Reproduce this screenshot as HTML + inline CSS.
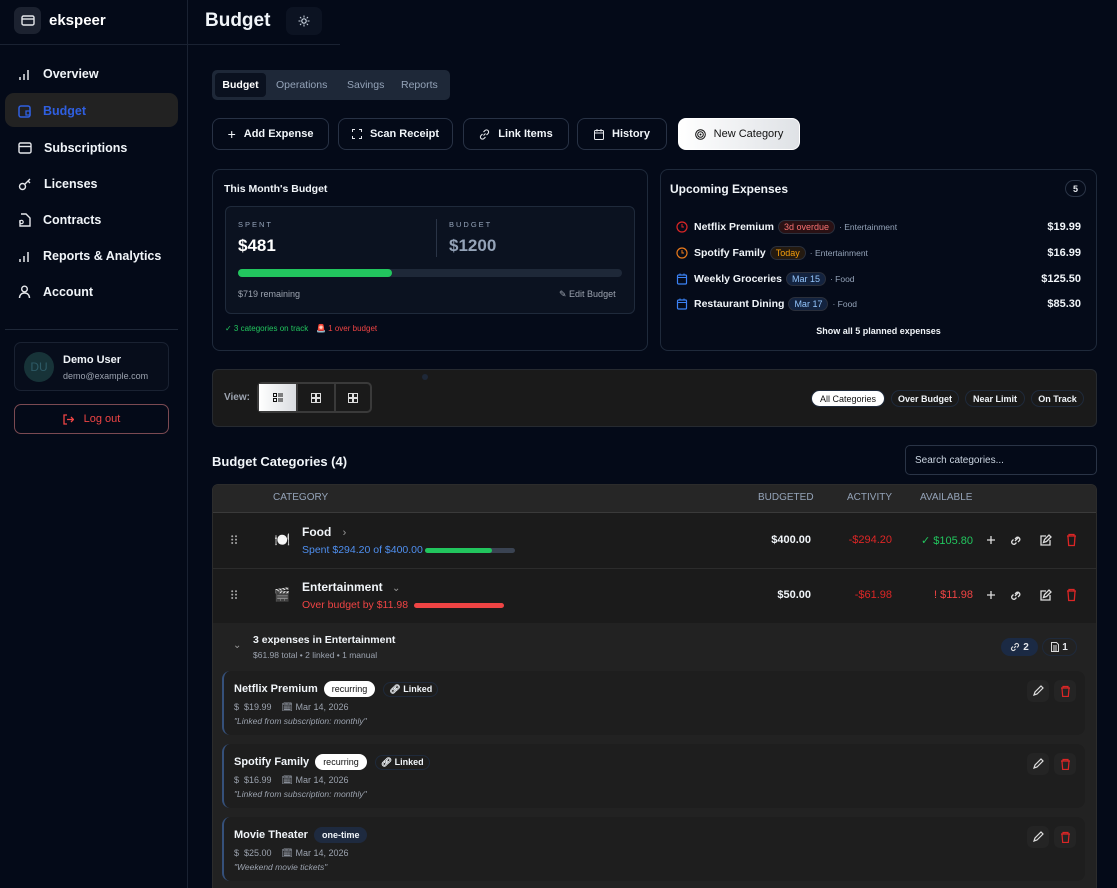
<!DOCTYPE html>
<html><head><meta charset="utf-8"><style>
*{box-sizing:border-box;margin:0;padding:0}
html,body{width:1117px;height:888px;overflow:hidden}
body{background:#040a18;font-family:"Liberation Sans",sans-serif;color:#e5e7eb;position:relative;font-size:11px}
.a{position:absolute}
.b{font-weight:bold}
svg{display:block}
.nav{position:absolute;left:18px;font-size:12.5px;font-weight:bold;color:#f1f5f9;display:flex;align-items:center;gap:12px}
.btn{position:absolute;top:118px;height:32px;border:1px solid #283245;border-radius:8px;display:flex;align-items:center;justify-content:center;gap:8px;font-size:11px;font-weight:bold;color:#f1f5f9;background:#040a18}
.card{position:absolute;border:1px solid #1f2a3b;border-radius:8px;background:#050b19}
.pill{position:absolute;top:390px;height:17px;border:1px solid #1f2a3b;border-radius:9px;font-size:9px;font-weight:bold;display:flex;align-items:center;justify-content:center;color:#f1f5f9}
.tag{display:inline-block;font-size:9px;padding:1px 5px;border-radius:8px;border:1px solid #2a2f3b;margin:0 4px;font-weight:normal}
.ue{position:absolute;left:676px;width:405px;font-size:10.5px;font-weight:bold;color:#f1f5f9;display:flex;align-items:center}
.amt{position:absolute;right:0;font-weight:bold;font-size:11px}
.exp{position:absolute;left:222px;width:863px;height:64px;background:#1e1e1e;border-radius:8px;border-left:2px solid #35507a}
.exp .t{position:absolute;left:10px;top:10px;font-size:11px;font-weight:bold;color:#f1f5f9;display:flex;align-items:center}
.exp .m{position:absolute;left:10px;top:31px;font-size:9px;color:#9ca3af}
.exp .n{position:absolute;left:10px;top:45px;font-size:8.5px;color:#9ca3af;font-style:italic}
.ib{position:absolute;width:22px;height:22px;border-radius:6px;background:#242424;display:flex;align-items:center;justify-content:center}
</style></head><body>
<!-- sidebar -->
<div class="a" style="left:187px;top:0;width:1px;height:888px;background:#1a2232"></div>
<div class="a" style="left:0;top:44px;width:187px;height:1px;background:#1a2232"></div>
<div class="a" style="left:188px;top:44px;width:152px;height:1px;background:#1a2232"></div>
<div class="a" style="left:14px;top:7px;width:27px;height:27px;border-radius:7px;background:#1c2230;display:flex;align-items:center;justify-content:center"><svg width="14" height="11"><rect x="1" y="1" width="12" height="9" rx="1.5" fill="none" stroke="#e5e7eb" stroke-width="1.4"/><line x1="1" y1="4" x2="13" y2="4" stroke="#e5e7eb" stroke-width="1.4"/></svg></div>
<div class="a b" style="left:49px;top:12px;font-size:15px;color:#fff">ekspeer</div>

<div class="a" style="left:5px;top:93px;width:173px;height:34px;border-radius:9px;background:#222"></div>
<div class="nav" style="top:67px"><svg width="13" height="13"><path d="M2 12V9M6 12V6M10 12V2" stroke="#e5e7eb" stroke-width="1.5"/></svg>Overview</div>
<div class="nav" style="top:104px;color:#2f5fe0"><svg width="13" height="13"><rect x="1" y="1" width="11" height="11" rx="2" fill="none" stroke="#2f5fe0" stroke-width="1.5"/><path d="M8 6h4v4H8z" fill="none" stroke="#2f5fe0" stroke-width="1.3"/></svg>Budget</div>
<div class="nav" style="top:141px"><svg width="14" height="12"><rect x="1" y="1" width="12" height="10" rx="1.5" fill="none" stroke="#e5e7eb" stroke-width="1.4"/><line x1="1" y1="4.5" x2="13" y2="4.5" stroke="#e5e7eb" stroke-width="1.4"/></svg>Subscriptions</div>
<div class="nav" style="top:177px"><svg width="14" height="13"><circle cx="4.5" cy="8.5" r="3" fill="none" stroke="#e5e7eb" stroke-width="1.4"/><path d="M7 6l5-5M10 3l2 2" stroke="#e5e7eb" stroke-width="1.4"/></svg>Licenses</div>
<div class="nav" style="top:213px"><svg width="13" height="14"><path d="M3 1h5l4 4v8H2V7" fill="none" stroke="#e5e7eb" stroke-width="1.4"/><circle cx="3.5" cy="9" r="1.7" fill="none" stroke="#e5e7eb" stroke-width="1.2"/></svg>Contracts</div>
<div class="nav" style="top:249px"><svg width="13" height="13"><path d="M2 12V9M6 12V6M10 12V2" stroke="#e5e7eb" stroke-width="1.5"/></svg>Reports &amp; Analytics</div>
<div class="nav" style="top:285px"><svg width="13" height="14"><circle cx="6.5" cy="4" r="2.8" fill="none" stroke="#e5e7eb" stroke-width="1.4"/><path d="M1.5 13c0-3 2-5 5-5s5 2 5 5" fill="none" stroke="#e5e7eb" stroke-width="1.4"/></svg>Account</div>
<div class="a" style="left:5px;top:329px;width:173px;height:1px;background:#1f2838"></div>
<div class="a" style="left:14px;top:342px;width:155px;height:49px;border:1px solid #1a2232;border-radius:7px;background:#070d1b"></div>
<div class="a" style="left:24px;top:352px;width:30px;height:30px;border-radius:50%;background:#173338;color:#2d5a66;font-size:12px;display:flex;align-items:center;justify-content:center">DU</div>
<div class="a b" style="left:63px;top:354px;font-size:11px;color:#f1f5f9">Demo User</div>
<div class="a" style="left:63px;top:371px;font-size:9px;color:#9ca3af">demo@example.com</div>
<div class="a" style="left:14px;top:404px;width:155px;height:30px;border:1px solid #7b4a52;border-radius:7px;display:flex;align-items:center;justify-content:center;gap:10px;color:#ef4444;font-size:11px"><svg width="11" height="11"><path d="M4 1H1v9h3M4 5.5h6M8 3l2.5 2.5L8 8" fill="none" stroke="#ef4444" stroke-width="1.3"/></svg>Log out</div>

<!-- header -->
<div class="a b" style="left:205px;top:10px;font-size:19px;color:#f1f5f9">Budget</div>
<div class="a" style="left:286px;top:7px;width:36px;height:28px;border-radius:7px;background:#0c1322;display:flex;align-items:center;justify-content:center"><svg width="12" height="12"><circle cx="6" cy="6" r="2.2" fill="none" stroke="#cbd5e1" stroke-width="1.2"/><path d="M6 0.5v2M6 9.5v2M0.5 6h2M9.5 6h2M2 2l1.3 1.3M8.7 8.7L10 10M2 10l1.3-1.3M8.7 3.3L10 2" stroke="#cbd5e1" stroke-width="1"/></svg></div>

<!-- tabs -->
<div class="a" style="left:212px;top:70px;width:238px;height:30px;background:#1e2838;border-radius:5px"></div>
<div class="a b" style="left:215px;top:73px;width:51px;height:24px;background:#0a111f;border-radius:4px;font-size:10.5px;color:#fff;display:flex;align-items:center;justify-content:center">Budget</div>
<div class="a" style="left:276px;top:79px;font-size:10.5px;color:#94a3b8">Operations</div>
<div class="a" style="left:347px;top:79px;font-size:10.5px;color:#94a3b8">Savings</div>
<div class="a" style="left:401px;top:79px;font-size:10.5px;color:#94a3b8">Reports</div>

<!-- buttons -->
<div class="btn" style="left:212px;width:117px"><span style="font-size:14px;font-weight:normal">+</span>Add Expense</div>
<div class="btn" style="left:338px;width:115px"><svg width="10" height="10"><path d="M0.5 3V0.5H3M7 0.5h2.5V3M9.5 7v2.5H7M3 9.5H0.5V7" fill="none" stroke="#e5e7eb"/></svg>Scan Receipt</div>
<div class="btn" style="left:463px;width:106px"><svg width="11" height="11"><path d="M4.5 6.5l2-2M3.5 5L2 6.5a2 2 0 003 3L6.5 8M7.5 6L9 4.5a2 2 0 00-3-3L4.5 3" fill="none" stroke="#e5e7eb" stroke-width="1.1"/></svg>Link Items</div>
<div class="btn" style="left:577px;width:90px"><svg width="10" height="11"><rect x="0.5" y="1.5" width="9" height="9" rx="1" fill="none" stroke="#e5e7eb"/><path d="M0.5 4h9M3 0v2.5M7 0v2.5" stroke="#e5e7eb"/></svg>History</div>
<div class="btn" style="left:678px;width:122px;background:linear-gradient(90deg,#fff,#dfe2e6);color:#111;font-weight:normal;border-color:#fff"><svg width="11" height="11"><circle cx="5.5" cy="5.5" r="4.8" fill="none" stroke="#111"/><circle cx="5.5" cy="5.5" r="2.8" fill="none" stroke="#111"/><circle cx="5.5" cy="5.5" r="1" fill="#111"/></svg>New Category</div>

<!-- budget card -->
<div class="card" style="left:212px;top:169px;width:436px;height:182px"></div>
<div class="a b" style="left:224px;top:183px;font-size:10.5px;color:#f1f5f9">This Month's Budget</div>
<div class="a" style="left:225px;top:206px;width:410px;height:108px;border:1px solid #1f2a3b;border-radius:6px;background:#0b1220"></div>
<div class="a" style="left:238px;top:220px;font-size:7.5px;letter-spacing:2px;color:#94a3b8">SPENT</div>
<div class="a b" style="left:238px;top:236px;font-size:17px;color:#fff">$481</div>
<div class="a" style="left:436px;top:219px;width:1px;height:38px;background:#2a3446"></div>
<div class="a" style="left:449px;top:220px;font-size:7.5px;letter-spacing:2px;color:#94a3b8">BUDGET</div>
<div class="a b" style="left:449px;top:236px;font-size:17px;color:#94a3b8">$1200</div>
<div class="a" style="left:238px;top:269px;width:384px;height:8px;border-radius:4px;background:#1e2838"></div>
<div class="a" style="left:238px;top:269px;width:154px;height:8px;border-radius:4px;background:#22c55e"></div>
<div class="a" style="left:238px;top:289px;font-size:9px;color:#9ca3af">$719 remaining</div>
<div class="a" style="left:559px;top:289px;font-size:9px;color:#9ca3af">✎ Edit Budget</div>
<div class="a" style="left:225px;top:324px;font-size:8px;color:#22c55e">✓ 3 categories on track</div>
<div class="a" style="left:316px;top:324px;font-size:8px;color:#ef4444">🚨 1 over budget</div>

<!-- upcoming -->
<div class="card" style="left:660px;top:169px;width:437px;height:182px"></div>
<div class="a b" style="left:670px;top:182px;font-size:12px;color:#f1f5f9">Upcoming Expenses</div>
<div class="a b" style="left:1065px;top:180px;width:21px;height:17px;border:1px solid #2a3446;border-radius:9px;font-size:9px;display:flex;align-items:center;justify-content:center">5</div>
<div class="ue" style="top:220px"><svg width="12" height="12"><circle cx="6" cy="6" r="5" fill="none" stroke="#dc2626" stroke-width="1.2"/><path d="M6 3v3h2" stroke="#dc2626" fill="none"/></svg><span style="margin-left:6px">Netflix Premium</span><span class="tag" style="color:#f87171;background:#2a1114">3d overdue</span><span style="font-weight:normal;font-size:8.5px;color:#94a3b8">· Entertainment</span><span class="amt">$19.99</span></div>
<div class="ue" style="top:246px"><svg width="12" height="12"><circle cx="6" cy="6" r="5" fill="none" stroke="#ea7a1b" stroke-width="1.2"/><path d="M6 3v3h2" stroke="#ea7a1b" fill="none"/></svg><span style="margin-left:6px">Spotify Family</span><span class="tag" style="color:#f59e0b;background:#241a10">Today</span><span style="font-weight:normal;font-size:8.5px;color:#94a3b8">· Entertainment</span><span class="amt">$16.99</span></div>
<div class="ue" style="top:272px"><svg width="12" height="12"><rect x="1.5" y="2" width="9" height="9" rx="1" fill="none" stroke="#3b82f6" stroke-width="1.2"/><path d="M1.5 4.5h9M4 0.5v2M8 0.5v2" stroke="#3b82f6"/></svg><span style="margin-left:6px">Weekly Groceries</span><span class="tag" style="color:#93c5fd;background:#13233f">Mar 15</span><span style="font-weight:normal;font-size:8.5px;color:#94a3b8">· Food</span><span class="amt">$125.50</span></div>
<div class="ue" style="top:297px"><svg width="12" height="12"><rect x="1.5" y="2" width="9" height="9" rx="1" fill="none" stroke="#3b82f6" stroke-width="1.2"/><path d="M1.5 4.5h9M4 0.5v2M8 0.5v2" stroke="#3b82f6"/></svg><span style="margin-left:6px">Restaurant Dining</span><span class="tag" style="color:#93c5fd;background:#13233f">Mar 17</span><span style="font-weight:normal;font-size:8.5px;color:#94a3b8">· Food</span><span class="amt">$85.30</span></div>
<div class="a b" style="left:660px;width:437px;top:326px;text-align:center;font-size:9px;color:#f1f5f9">Show all 5 planned expenses</div>

<!-- view bar -->
<div class="a" style="left:212px;top:369px;width:885px;height:58px;background:#1a1a1a;border:1px solid #262a30;border-radius:6px"></div>
<div class="a" style="left:422px;top:374px;width:6px;height:6px;border-radius:50%;background:#1e2838"></div>
<div class="a b" style="left:224px;top:392px;font-size:10px;color:#9ca3af">View:</div>
<div class="a" style="left:257px;top:382px;width:115px;height:31px;border:2px solid #3a3a3a;border-radius:5px;background:#1a1a1a;display:flex">
<div style="width:37px;background:linear-gradient(90deg,#fff,#d9dce0);display:flex;align-items:center;justify-content:center"><svg width="10" height="9"><path d="M0.5 0.5h3v3h-3zM0.5 5.5h3v3h-3zM5 1h5M5 3h5M5 6h5M5 8h5" fill="none" stroke="#111"/></svg></div>
<div style="width:38px;border-left:2px solid #3a3a3a;display:flex;align-items:center;justify-content:center"><svg width="10" height="10"><path d="M0.5 0.5h4v4h-4zM5.5 0.5h4v4h-4zM0.5 5.5h4v4h-4zM5.5 5.5h4v4h-4z" fill="none" stroke="#ddd"/></svg></div>
<div style="width:36px;border-left:2px solid #3a3a3a;display:flex;align-items:center;justify-content:center"><svg width="10" height="10"><path d="M0.5 0.5h4v4h-4zM5.5 0.5h4v4h-4zM0.5 5.5h4v4h-4zM5.5 5.5h4v4h-4z" fill="none" stroke="#ddd"/></svg></div></div>
<div class="pill" style="left:811px;width:74px;background:#fff;color:#111;font-weight:normal">All Categories</div>
<div class="pill" style="left:891px;width:68px">Over Budget</div>
<div class="pill" style="left:965px;width:60px">Near Limit</div>
<div class="pill" style="left:1031px;width:53px">On Track</div>

<!-- categories -->
<div class="a b" style="left:212px;top:454px;font-size:13px;color:#f1f5f9">Budget Categories (4)</div>
<div class="a" style="left:905px;top:445px;width:192px;height:30px;border:1px solid #2a3446;border-radius:5px;font-size:10px;color:#cbd5e1;padding:9px 9px">Search categories...</div>

<div class="a" style="left:212px;top:484px;width:885px;height:410px;background:#1b1b1b;border:1px solid #2c2c2c;border-radius:6px;overflow:hidden">
 <div class="a" style="left:0;top:0;width:885px;height:28px;background:#262626;border-bottom:1px solid #3a3a3a"></div>
 <div class="a" style="left:0;top:83px;width:885px;height:1px;background:#2c2c2c"></div>
 <div class="a" style="left:0;top:138px;width:885px;height:300px;background:#222"></div>
</div>
<div class="a" style="left:273px;top:492px;font-size:10px;color:#94a3b8">CATEGORY</div>
<div class="a" style="left:758px;top:492px;font-size:10px;color:#94a3b8">BUDGETED</div>
<div class="a" style="left:847px;top:492px;font-size:10px;color:#94a3b8">ACTIVITY</div>
<div class="a" style="left:920px;top:492px;font-size:10px;color:#94a3b8">AVAILABLE</div>

<!-- drag handles -->
<svg class="a" style="left:231px;top:535px" width="7" height="65"><g fill="#aaa"><circle cx="1.2" cy="1.2" r="1"/><circle cx="5" cy="1.2" r="1"/><circle cx="1.2" cy="4.6" r="1"/><circle cx="5" cy="4.6" r="1"/><circle cx="1.2" cy="8" r="1"/><circle cx="5" cy="8" r="1"/><circle cx="1.2" cy="56.2" r="1"/><circle cx="5" cy="56.2" r="1"/><circle cx="1.2" cy="59.6" r="1"/><circle cx="5" cy="59.6" r="1"/><circle cx="1.2" cy="63" r="1"/><circle cx="5" cy="63" r="1"/></g></svg>

<!-- Food -->
<div class="a" style="left:274px;top:532px;font-size:13px">🍽️</div>
<div class="a b" style="left:302px;top:525px;font-size:12px;color:#f1f5f9">Food <span style="font-weight:normal;color:#999;margin-left:8px;font-size:11px">›</span></div>
<div class="a" style="left:302px;top:544px;font-size:10.5px;color:#4f8fef">Spent $294.20 of $400.00</div>
<div class="a" style="left:425px;top:548px;width:90px;height:5px;border-radius:3px;background:#3a4352"></div>
<div class="a" style="left:425px;top:548px;width:67px;height:5px;border-radius:3px;background:#22c55e"></div>
<div class="a b" style="left:740px;width:71px;top:534px;text-align:right;font-size:11px;color:#f1f5f9">$400.00</div>
<div class="a" style="left:820px;width:72px;top:534px;text-align:right;font-size:11px;color:#dc2626">-$294.20</div>
<div class="a" style="left:900px;width:73px;top:534px;text-align:right;font-size:11px;color:#22c55e">✓ $105.80</div>

<!-- Entertainment -->
<div class="a" style="left:274px;top:587px;font-size:13px">🎬</div>
<div class="a b" style="left:302px;top:580px;font-size:12px;color:#f1f5f9">Entertainment <span style="font-weight:normal;color:#999;margin-left:6px;font-size:10px">⌄</span></div>
<div class="a" style="left:302px;top:599px;font-size:10.5px;color:#ef4444">Over budget by $11.98</div>
<div class="a" style="left:414px;top:603px;width:90px;height:5px;border-radius:3px;background:#ef4444"></div>
<div class="a b" style="left:740px;width:71px;top:589px;text-align:right;font-size:11px;color:#f1f5f9">$50.00</div>
<div class="a" style="left:820px;width:72px;top:589px;text-align:right;font-size:11px;color:#dc2626">-$61.98</div>
<div class="a" style="left:900px;width:73px;top:589px;text-align:right;font-size:11px;color:#ef4444">! $11.98</div>

<!-- action icons rows -->
<svg class="a" style="left:985px;top:533px" width="100" height="70">
 <g stroke="#ddd" stroke-width="1.3" fill="none">
  <path d="M6 3v8M2 7h8"/><path d="M6 58v8M2 62h8"/>
  <path d="M30 8l4-4M28.5 6.5l-1.5 1.5a2.2 2.2 0 003 3l1.5-1.5M33 9l1.5-1.5a2.2 2.2 0 00-3-3L30 6"/>
  <path d="M30 8l4-4M28.5 6.5l-1.5 1.5a2.2 2.2 0 003 3l1.5-1.5M33 9l1.5-1.5a2.2 2.2 0 00-3-3L30 6" transform="translate(0,55)"/>
  <path d="M61 3h-5v9h9V7M58.5 9.5l1-3 4.5-4.5 2 2-4.5 4.5z"/>
  <path d="M61 58h-5v9h9v-5M58.5 64.5l1-3 4.5-4.5 2 2-4.5 4.5z"/>
 </g>
 <g stroke="#dc2626" stroke-width="1.3" fill="none">
  <path d="M82 3h9M84 3V1.5h5V3M83 3.5l.7 9h5.6l.7-9"/>
  <path d="M82 58h9M84 58v-1.5h5V58M83 58.5l.7 9h5.6l.7-9"/>
 </g>
</svg>

<!-- expanded header -->
<div class="a" style="left:233px;top:640px;font-size:10px;color:#999">⌄</div>
<div class="a b" style="left:253px;top:634px;font-size:10.5px;color:#f1f5f9">3 expenses in Entertainment</div>
<div class="a" style="left:253px;top:650px;font-size:8.5px;color:#9ca3af">$61.98 total • 2 linked • 1 manual</div>
<div class="a b" style="left:1001px;top:638px;width:37px;height:18px;border-radius:9px;background:#1b2a44;font-size:10px;display:flex;align-items:center;justify-content:center;gap:3px"><svg width="10" height="10"><path d="M4 6l2-2M3 4.5L1.8 5.7a1.8 1.8 0 002.5 2.5L5.5 7M7 5.5l1.2-1.2a1.8 1.8 0 00-2.5-2.5L4.5 3" fill="none" stroke="#ddd" stroke-width="1.1"/></svg><span>2</span></div>
<div class="a b" style="left:1042px;top:638px;width:35px;height:18px;border-radius:9px;border:1px solid #1f2a3b;font-size:10px;display:flex;align-items:center;justify-content:center;gap:3px"><svg width="8" height="10"><path d="M0.5 0.5h5l2 2v7h-7z" fill="none" stroke="#ddd"/><path d="M2 4h4M2 6h4M2 8h4" stroke="#ddd"/></svg>1</div>

<!-- expenses -->
<div class="exp" style="top:671px"><div class="t">Netflix Premium<span class="tag" style="background:#fff;color:#111;border-color:#fff;margin-left:6px;padding:2px 7px">recurring</span><span class="tag" style="border-color:#1f2a3b;font-weight:bold">🔗︎ Linked</span></div><div class="m">$&nbsp; $19.99 &nbsp;&nbsp; 🗓︎ Mar 14, 2026</div><div class="n">"Linked from subscription: monthly"</div></div>
<div class="exp" style="top:744px"><div class="t">Spotify Family<span class="tag" style="background:#fff;color:#111;border-color:#fff;margin-left:6px;padding:2px 7px">recurring</span><span class="tag" style="border-color:#1f2a3b;font-weight:bold">🔗︎ Linked</span></div><div class="m">$&nbsp; $16.99 &nbsp;&nbsp; 🗓︎ Mar 14, 2026</div><div class="n">"Linked from subscription: monthly"</div></div>
<div class="exp" style="top:817px"><div class="t">Movie Theater<span class="tag" style="background:#1e2a3f;color:#f1f5f9;border-color:#1e2a3f;margin-left:6px;padding:2px 7px;font-weight:bold">one-time</span></div><div class="m">$&nbsp; $25.00 &nbsp;&nbsp; 🗓︎ Mar 14, 2026</div><div class="n">"Weekend movie tickets"</div></div>
<div class="ib" style="left:1027px;top:680px"><svg width="12" height="12"><path d="M2 10l1-3 6-6 2 2-6 6z" fill="none" stroke="#ddd" stroke-width="1.2"/></svg></div>
<div class="ib" style="left:1054px;top:680px"><svg width="11" height="12"><path d="M1 3h9M3 3V1.5h5V3M2 3.5l.7 8h5.6l.7-8" fill="none" stroke="#dc2626" stroke-width="1.2"/></svg></div>
<div class="ib" style="left:1027px;top:753px"><svg width="12" height="12"><path d="M2 10l1-3 6-6 2 2-6 6z" fill="none" stroke="#ddd" stroke-width="1.2"/></svg></div>
<div class="ib" style="left:1054px;top:753px"><svg width="11" height="12"><path d="M1 3h9M3 3V1.5h5V3M2 3.5l.7 8h5.6l.7-8" fill="none" stroke="#dc2626" stroke-width="1.2"/></svg></div>
<div class="ib" style="left:1027px;top:826px"><svg width="12" height="12"><path d="M2 10l1-3 6-6 2 2-6 6z" fill="none" stroke="#ddd" stroke-width="1.2"/></svg></div>
<div class="ib" style="left:1054px;top:826px"><svg width="11" height="12"><path d="M1 3h9M3 3V1.5h5V3M2 3.5l.7 8h5.6l.7-8" fill="none" stroke="#dc2626" stroke-width="1.2"/></svg></div>
</body></html>
